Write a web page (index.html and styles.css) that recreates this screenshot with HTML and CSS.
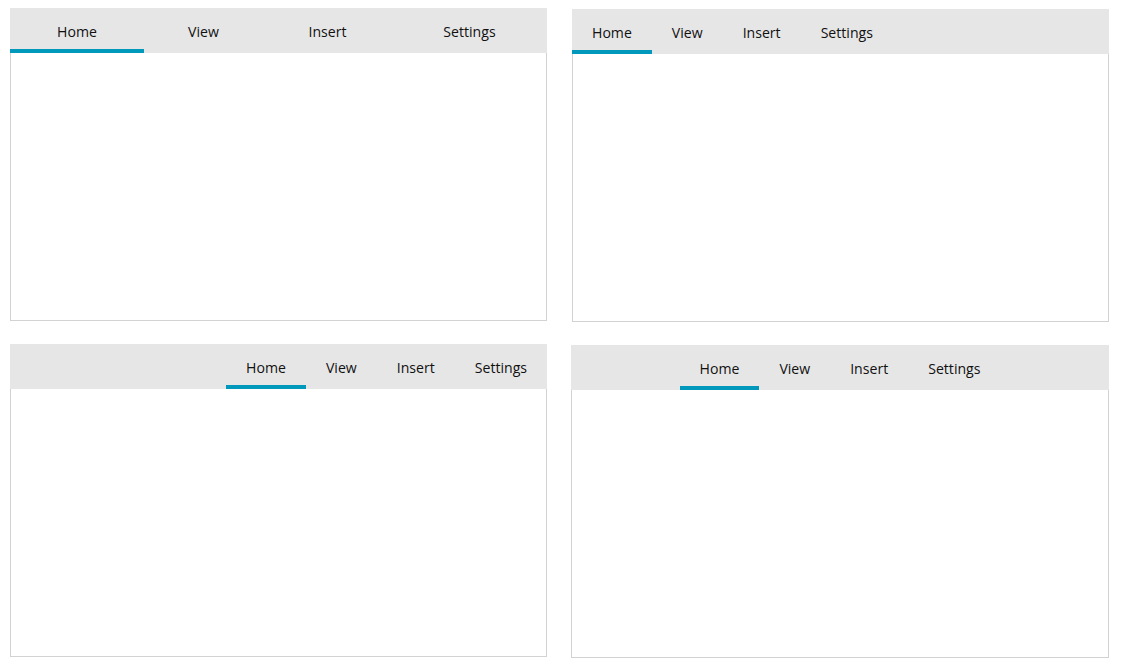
FILE: index.html
```html
<!DOCTYPE html>
<html>
<head>
<meta charset="utf-8">
<link rel="stylesheet" href="styles.css">
</head>
<body>
<div class="grid">
  <div class="panel">
    <div class="tabs tabs-fill">
      <div class="tab active">Home</div>
      <div class="tab">View</div>
      <div class="tab">Insert</div>
      <div class="tab">Settings</div>
    </div>
    <div class="content"></div>
  </div>
  <div class="panel panel-r">
    <div class="tabs tabs-start">
      <div class="tab active">Home</div>
      <div class="tab">View</div>
      <div class="tab">Insert</div>
      <div class="tab">Settings</div>
    </div>
    <div class="content"></div>
  </div>
  <div class="panel">
    <div class="tabs tabs-end">
      <div class="tab active">Home</div>
      <div class="tab">View</div>
      <div class="tab">Insert</div>
      <div class="tab">Settings</div>
    </div>
    <div class="content"></div>
  </div>
  <div class="panel panel-r2">
    <div class="tabs tabs-center">
      <div class="tab active">Home</div>
      <div class="tab">View</div>
      <div class="tab">Insert</div>
      <div class="tab">Settings</div>
    </div>
    <div class="content"></div>
  </div>
</div>
</body>
</html>
```

FILE: styles.css
```css
html, body {
  margin: 0;
  padding: 0;
  background: #ffffff;
}

.grid {
  display: grid;
  grid-template-columns: 537px 537px;
  column-gap: 25px;
  row-gap: 22px;
  padding: 8px 0 0 10px;
}

.panel {
  display: flex;
  flex-direction: column;
  height: 313px;
}

.panel-r {
  margin-top: 1px;
}

.panel-r2 {
  margin-top: 1px;
  margin-left: -1px;
}

.tabs {
  display: flex;
  height: 45px;
  background: #e6e6e6;
  font-family: "Open Sans", "Noto Sans", sans-serif;
  font-size: 14.1px;
  color: #111111;
}

.tabs-start { justify-content: flex-start; }
.tabs-end { justify-content: flex-end; }
.tabs-center { justify-content: center; }

.tab {
  display: flex;
  align-items: center;
  justify-content: center;
  padding: 5px 20px 0;
  box-sizing: border-box;
  border-bottom: 4px solid transparent;
}

.tabs-fill .tab {
  padding: 5px 0 0;
  flex: 134 1 0;
}

.tabs-fill .tab:nth-child(2) { flex-grow: 119; }
.tabs-fill .tab:nth-child(3) { flex-grow: 129; }
.tabs-fill .tab:nth-child(4) { flex-grow: 155; }

.tab.active {
  border-bottom-color: #0099bc;
}

.content {
  flex: 1;
  border: 1px solid #d2d2d2;
  border-top: none;
}
```
